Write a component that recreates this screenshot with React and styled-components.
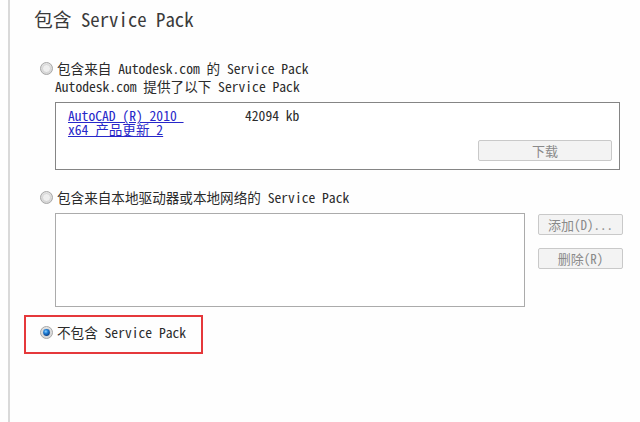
import React from 'react';
import styled, { createGlobalStyle } from 'styled-components';

const GlobalStyle = createGlobalStyle`
  html, body {
    margin: 0;
    padding: 0;
    background: #fefefe;
  }
`;

const FONT = `"Noto Sans Mono CJK SC", "Liberation Mono", "Noto Sans CJK SC", monospace`;

const Page = styled.div`
  width: 630px;
  height: 422px;
  margin-left: 8px;
  border-left: 2px solid #d9d9d9;
  box-sizing: border-box;
  display: flex;
  flex-direction: column;
  font-family: ${FONT};
  color: #2b2b2b;
  font-size: 13.6px;
`;

const Title = styled.h1`
  margin: 8px 0 0 24px;
  height: 22px;
  line-height: 22px;
  font-size: 18.8px;
  font-weight: normal;
  color: #3a3a3a;
  white-space: pre;
`;

const OptionRow = styled.label`
  display: flex;
  align-items: center;
  gap: 4px;
  height: 18px;
  margin: ${({ $top }) => $top}px 0 0 30px;
  white-space: pre;
`;

const SubText = styled.div`
  height: 18px;
  line-height: 18px;
  margin-left: 45px;
  white-space: pre;
`;

const ListBox = styled.div`
  box-sizing: border-box;
  margin: 7px 0 0 45px;
  width: ${({ $w }) => $w}px;
  height: ${({ $h }) => $h}px;
  border: 1px solid ${({ $dark }) => ($dark ? '#858585' : '#ababab')};
  background: #fff;
`;

const DownloadBox = styled(ListBox)`
  display: flex;
  flex-direction: column;
  justify-content: space-between;
  padding: 5px 7px 8px 12px;
`;

const Entry = styled.div`
  display: flex;
  line-height: 14px;
`;

const EntryLink = styled.a`
  width: 177px;
  color: #2727c9;
  text-decoration: underline;
  white-space: pre;
`;

const EntrySize = styled.span`
  white-space: pre;
`;

const Button = styled.button`
  box-sizing: border-box;
  width: ${({ $w }) => $w}px;
  height: 21px;
  padding: 0;
  border: 1px solid #c9c9c9;
  border-radius: 2px;
  background: #f3f3f3;
  color: #8a8a8a;
  font-family: ${FONT};
  font-size: 13px;
  align-self: ${({ $end }) => ($end ? 'flex-end' : 'auto')};
  white-space: pre;
`;

const LocalRow = styled.div`
  display: flex;
  gap: 13px;
  align-items: flex-start;
`;

const SideButtons = styled.div`
  display: flex;
  flex-direction: column;
  gap: 13px;
  margin-top: 8px;
`;

const Highlight = styled.div`
  box-sizing: border-box;
  margin: 8px 0 0 14px;
  width: 179px;
  height: 39px;
  border: 2px solid #e5383b;
  padding-top: 6px;

  ${OptionRow} {
    margin: 0 0 0 14px;
  }
`;

const Radio = ({ checked }) => (
  <svg width="13" height="13" viewBox="0 0 13 13">
    <defs>
      <radialGradient id="rbg" cx="50%" cy="40%" r="60%">
        <stop offset="0%" stopColor="#f7f7f7" />
        <stop offset="100%" stopColor="#d2d2d2" />
      </radialGradient>
      <radialGradient id="rdot" cx="40%" cy="35%" r="65%">
        <stop offset="0%" stopColor="#8fd0ff" />
        <stop offset="45%" stopColor="#1f7fd6" />
        <stop offset="100%" stopColor="#0b3f86" />
      </radialGradient>
    </defs>
    <circle cx="6.5" cy="6.5" r="6" fill="url(#rbg)" stroke="#a8a8a8" strokeWidth="1" />
    <circle cx="6.5" cy="6.5" r="4" fill="#eeeeee" stroke="#c6c6c6" strokeWidth="0.6" />
    {checked && <circle cx="6.5" cy="6.5" r="3.4" fill="url(#rdot)" />}
  </svg>
);

export default function App() {
  return (
    <>
      <GlobalStyle />
      <Page>
        <Title>包含 Service Pack</Title>

        <OptionRow $top={29}>
          <Radio />
          <span>包含来自 Autodesk.com 的 Service Pack</span>
        </OptionRow>
        <SubText>Autodesk.com 提供了以下 Service Pack</SubText>
        <DownloadBox $w={565} $h={68} $dark>
          <Entry>
            <EntryLink href="#">
              {'AutoCAD (R) 2010 '}
              <br />
              {'x64 产品更新 2'}
            </EntryLink>
            <EntrySize>42094 kb</EntrySize>
          </Entry>
          <Button $w={134} $end>下载</Button>
        </DownloadBox>

        <OptionRow $top={18}>
          <Radio />
          <span>包含来自本地驱动器或本地网络的 Service Pack</span>
        </OptionRow>
        <LocalRow>
          <ListBox $w={470} $h={94} />
          <SideButtons>
            <Button $w={85}>添加(D)...</Button>
            <Button $w={85}>删除(R)</Button>
          </SideButtons>
        </LocalRow>

        <Highlight>
          <OptionRow>
            <Radio checked />
            <span>不包含 Service Pack</span>
          </OptionRow>
        </Highlight>
      </Page>
    </>
  );
}
